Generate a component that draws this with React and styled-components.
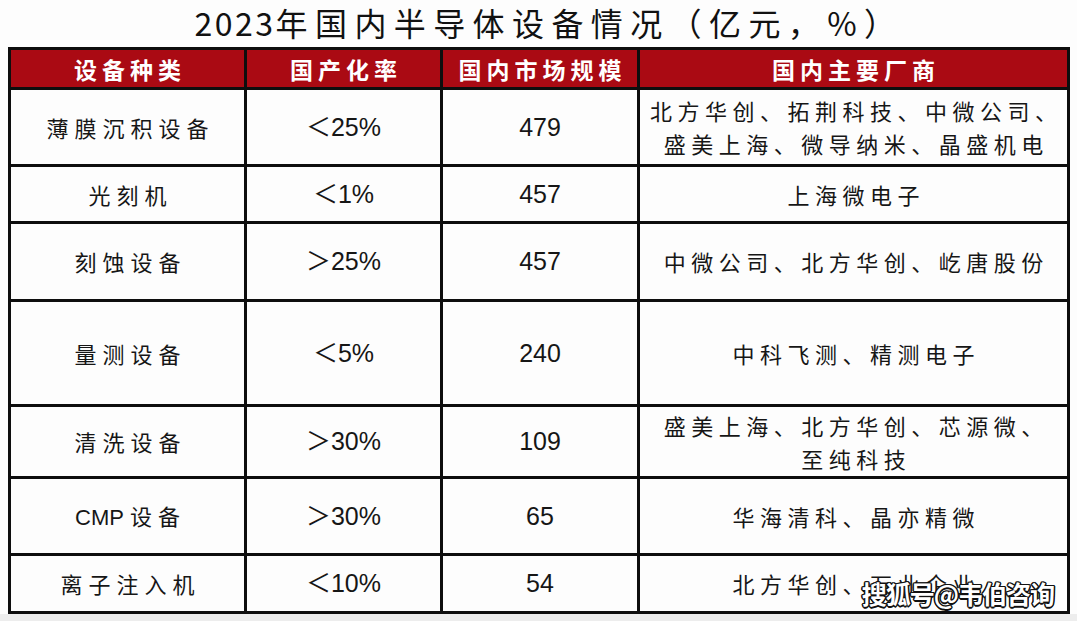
import React from 'react'
import styled, { createGlobalStyle, css } from 'styled-components'

const GlobalStyle = createGlobalStyle`
  html, body {
    margin: 0;
    padding: 0;
    background: #ededed;
  }
  body {
    font-family: "Noto Sans CJK SC", "Noto Sans", sans-serif;
    color: #161616;
  }
`

const Page = styled.div`
  width: 1077px;
  padding: 0 7px 0 8px;
  box-sizing: border-box;
  background: #fdfdfd;
`

const Title = styled.h1`
  margin: 0;
  height: 47px;
  padding: 0 0 3px 20px;
  box-sizing: border-box;
  display: flex;
  align-items: center;
  justify-content: center;
  font-size: 32px;
  font-weight: 400;
  line-height: 1;
  letter-spacing: 7.4px;
  color: #111;
`

const Year = styled.span`
  letter-spacing: 2.5px;
`

const Grid = styled.div`
  display: grid;
  grid-template-columns: 233px 193px 194px 427px;
  grid-template-rows: 37px 74px 54px 75px 102px 69px 74px 55px;
  gap: 3px;
  padding: 3px;
  width: 1062px;
  box-sizing: border-box;
  background: #0e0e0e;
`

const HeadCell = styled.div`
  display: flex;
  align-items: center;
  justify-content: center;
  padding-left: 5px;
  background: #aa0a13;
  color: #fff;
  font-size: 23px;
  font-weight: 700;
  letter-spacing: 5px;
`

const Cell = styled.div`
  position: relative;
  display: flex;
  flex-direction: column;
  align-items: center;
  justify-content: center;
  padding-left: ${p => p.$spacing}px;
  background: #fdfdfd;
  font-size: 22px;
  line-height: 33px;
  letter-spacing: ${p => p.$spacing}px;
  white-space: nowrap;

  ${p => p.$num && css`
    font-family: "Liberation Sans", "Noto Sans CJK SC", sans-serif;
    font-size: 25px;
  `}
`

const Latin = styled.span`
  font-family: "Liberation Sans", sans-serif;
  letter-spacing: 0;
  margin-right: 6px;
`

const Watermark = styled.span`
  position: absolute;
  right: 13px;
  bottom: 5px;
  font-size: 25px;
  font-weight: 700;
  line-height: 1;
  letter-spacing: -1px;
  color: #fff;
  text-shadow:
    1.5px 0 0 #111, -1.5px 0 0 #111, 0 1.5px 0 #111, 0 -1.5px 0 #111,
    1px 1px 0 #111, -1px -1px 0 #111, 1px -1px 0 #111, -1px 1px 0 #111;
`

const headers = ['设备种类', '国产化率', '国内市场规模', '国内主要厂商']

const rows = [
  { kind: '薄膜沉积设备', rate: '＜25%', size: '479', vendors: ['北方华创、拓荆科技、中微公司、', '盛美上海、微导纳米、晶盛机电'] },
  { kind: '光刻机', rate: '＜1%', size: '457', vendors: ['上海微电子'] },
  { kind: '刻蚀设备', rate: '＞25%', size: '457', vendors: ['中微公司、北方华创、屹唐股份'] },
  { kind: '量测设备', rate: '＜5%', size: '240', vendors: ['中科飞测、精测电子'] },
  { kind: '清洗设备', rate: '＞30%', size: '109', vendors: ['盛美上海、北方华创、芯源微、', '至纯科技'] },
  { kind: '设备', latin: 'CMP', rate: '＞30%', size: '65', vendors: ['华海清科、晶亦精微'] },
  { kind: '离子注入机', rate: '＜10%', size: '54', vendors: ['北方华创、万业企业'], mark: true },
]

const App = () => (
  <Page>
    <GlobalStyle />
    <Title>
      <Year>2023</Year>年国内半导体设备情况（亿元，%）
    </Title>
    <Grid>
      {headers.map(h => (
        <HeadCell key={h}>{h}</HeadCell>
      ))}
      {rows.map(r => (
        <React.Fragment key={r.kind + r.size}>
          <Cell $spacing={6}>
            <span>
              {r.latin && <Latin>{r.latin}</Latin>}
              {r.kind}
            </span>
          </Cell>
          <Cell $num $spacing={0}>{r.rate}</Cell>
          <Cell $num $spacing={0}>{r.size}</Cell>
          <Cell $spacing={5.5}>
            {r.vendors.map(v => (
              <span key={v}>{v}</span>
            ))}
            {r.mark && <Watermark>搜狐号@韦伯咨询</Watermark>}
          </Cell>
        </React.Fragment>
      ))}
    </Grid>
  </Page>
)

export default App
